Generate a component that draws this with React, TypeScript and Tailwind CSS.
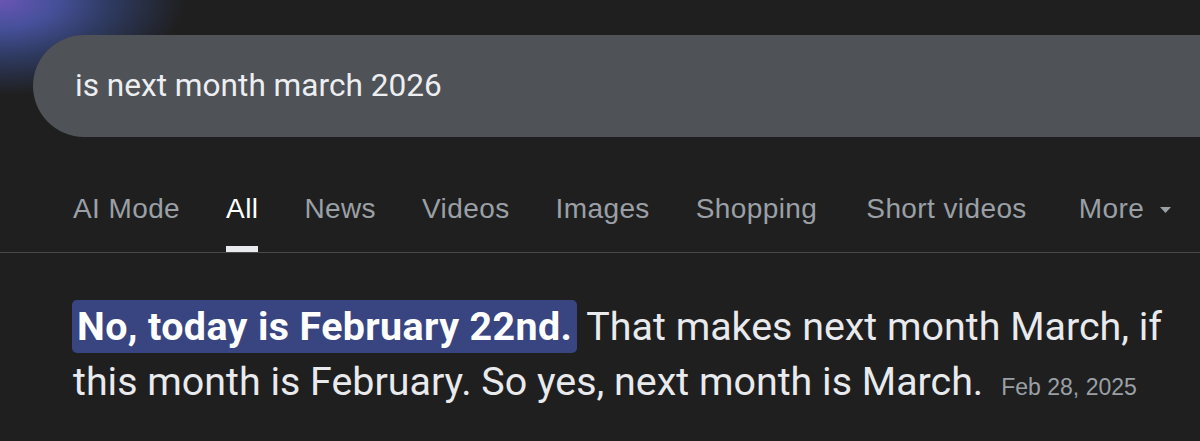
import React from "react";

const tabs = ["AI Mode", "All", "News", "Videos", "Images", "Shopping", "Short videos"];

export default function App() {
  return (
    <div className="relative w-[1200px] h-[441px] overflow-hidden bg-[#1f1f1f]">
      <div className="absolute left-0 top-0 w-[360px] h-[200px] bg-[radial-gradient(ellipse_185px_95px_at_0_0,#6a55b5_0%,#46509a_30%,#2e3a60_60%,transparent_100%)]" />
      <div className="relative pt-[35px] pl-[33px]">
        <div className="flex items-center h-[102px] w-[1200px] rounded-l-full bg-[#4f5257] pl-[42px]">
          <span
            className="text-[31.6px] text-[#eceef2] leading-none"
            style={{ fontFamily: "Roboto, 'Liberation Sans', sans-serif" }}
          >
            is next month march 2026
          </span>
        </div>
      </div>

      <div
        className="relative mt-[48px] border-b border-[#4a4a4a]"
        style={{ fontFamily: "'Liberation Sans', Arial, sans-serif" }}
      >
        <div className="flex items-start gap-[46px] pl-[73px] h-[67px]">
          {tabs.map((t) => (
            <div
              key={t}
              className={
                "relative flex flex-col items-center" + (t === "Short videos" ? " ml-[3px]" : "")
              }
            >
              <span
                className={
                  "text-[28px] tracking-[0.4px] leading-[48px] " +
                  (t === "All" ? "text-white" : "text-[#9aa0a6]")
                }
              >
                {t}
              </span>
              {t === "All" && (
                <div className="absolute left-0 right-0 top-[61px] h-[6px] bg-[#e8eaed]" />
              )}
            </div>
          ))}
          <div className="flex items-center gap-[16px] ml-[6px]">
            <span className="text-[28px] tracking-[0.4px] leading-[48px] text-[#9aa0a6]">More</span>
            <svg width="11" height="6" viewBox="0 0 11 6" className="mt-[2px]">
              <path d="M0 0 L11 0 L5.5 6 Z" fill="#9aa0a6" />
            </svg>
          </div>
        </div>
      </div>

      <div
        className="pl-[73px] pt-[46px] pr-[20px] text-[39.4px] leading-[55px] text-[#e8eaed]"
        style={{ fontFamily: "Roboto, 'Liberation Sans', sans-serif" }}
      >
        <span className="bg-[#394581] text-white font-bold tracking-[0.38px] rounded-[5px] px-[5px] py-[3px] -ml-[1px]">
          No, today is February 22nd.
        </span>{" "}
        That makes next month March, if this month is February. So yes, next month is March.
        <span
          className="ml-[18px] text-[23px] text-[#9aa0a6]"
          style={{ fontFamily: "'Liberation Sans', Arial, sans-serif" }}
        >
          Feb 28, 2025
        </span>
      </div>
    </div>
  );
}
